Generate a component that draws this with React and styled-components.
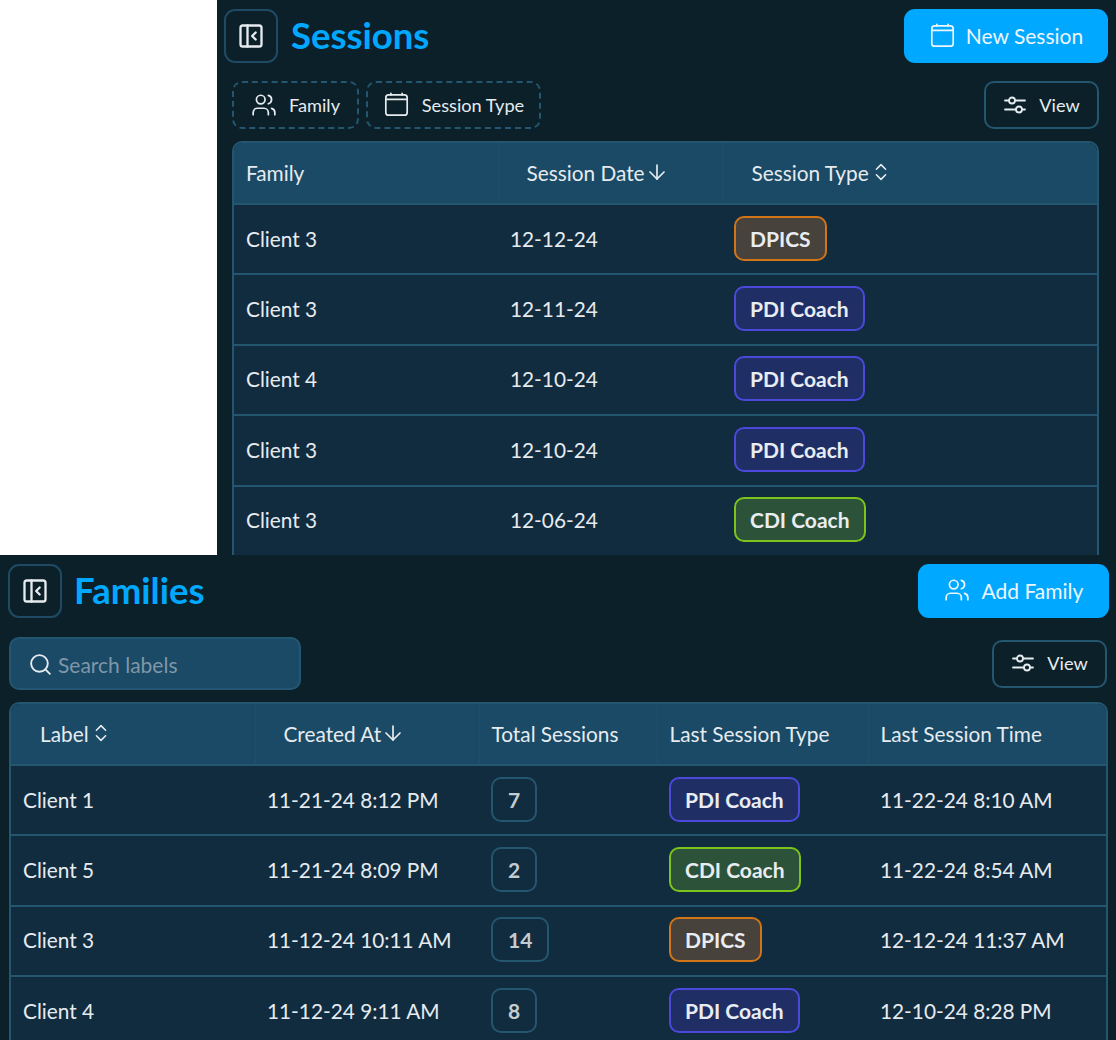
import React from 'react';
import styled, { createGlobalStyle } from 'styled-components';
import { PanelLeftClose, Users, Search, ArrowDown, ChevronsUpDown } from 'lucide-react';

const Global = createGlobalStyle`
  html, body { margin: 0; padding: 0; background: #0c2029; }
  body { font-family: Lato, "Noto Sans", sans-serif; color: #e6ebf0; }
  * { box-sizing: border-box; }
`;

const Top = styled.div`
  display: flex;
  height: 555px;
  overflow: hidden;
`;
const WhiteSide = styled.div`
  width: 217px;
  flex: none;
  background: #fff;
`;
const Panel = styled.section`
  flex: 1;
  min-width: 0;
  padding: ${p => p.$pad};
  background: #0c2029;
  overflow: hidden;
`;
const TitleRow = styled.div`
  display: flex;
  align-items: center;
  justify-content: space-between;
`;
const TitleLeft = styled.div`
  display: flex;
  align-items: center;
  gap: ${p => p.$gap}px;
`;
const Toggle = styled.button`
  width: 54px;
  height: 54px;
  display: flex;
  align-items: center;
  justify-content: center;
  background: transparent;
  border: 2px solid #1f4a63;
  border-radius: 11px;
  color: #e6ebf0;
  padding: 0;
`;
const Title = styled.h1`
  margin: 0;
  font-size: 36.5px;
  font-weight: 700;
  color: #00a8ff;
  line-height: 53px;
  padding-bottom: 1px;
`;
const Primary = styled.button`
  height: 54px;
  width: ${p => p.$w}px;
  display: flex;
  align-items: center;
  justify-content: center;
  gap: ${p => p.$gap}px;
  background: #00a8ff;
  border: none;
  border-radius: 11px;
  color: #eef6fb;
  font: 400 21px Lato, sans-serif;
  padding: 0 0 2px;
`;
const Toolbar = styled.div`
  display: flex;
  align-items: center;
  justify-content: space-between;
  margin: ${p => p.$margin};
`;
const Filters = styled.div`
  display: flex;
  gap: 7px;
`;
const Filter = styled.button`
  height: 48px;
  width: ${p => p.$w}px;
  display: flex;
  align-items: center;
  justify-content: center;
  gap: 12px;
  background: transparent;
  border: 2px dashed #24566f;
  border-radius: 10px;
  color: #e6ebf0;
  font: 400 18.2px Lato, sans-serif;
  padding: 0 0 1px;
`;
const ViewBtn = styled.button`
  height: 48px;
  width: 115px;
  display: flex;
  align-items: center;
  justify-content: center;
  gap: 12px;
  background: transparent;
  border: 2px solid #24566f;
  border-radius: 10px;
  color: #e6ebf0;
  font: 400 18.2px Lato, sans-serif;
  padding: 0 0 1px;
`;
const SearchBox = styled.div`
  width: 292px;
  height: 53px;
  display: flex;
  align-items: center;
  gap: 5px;
  padding: 1px 0 0 17px;
  background: #1a4a66;
  border: 2px solid #235672;
  border-radius: 10px;
  color: #e6ebf0;
  font-size: 21px;
  span { color: #7f97a8; }
`;
const TableWrap = styled.div`
  border: 2px solid #24566f;
  border-bottom: none;
  border-radius: 10px 10px 0 0;
  overflow: hidden;
  margin: ${p => p.$margin || 0};
`;
const Table = styled.table`
  width: 100%;
  border-collapse: collapse;
  table-layout: fixed;
  font-size: 20.8px;
`;
const Head = styled.th`
  height: 61px;
  padding: 0 12px 2px ${p => p.$pl || 12}px;
  background: #1a4a66;
  font-weight: 400;
  text-align: left;
  color: #e6ebf0;
  border-left: ${p => (p.$first ? 'none' : '1px solid #1f5068')};
  border-bottom: 2px solid #24566f;
  white-space: nowrap;
`;
const HeadInner = styled.span`
  display: inline-flex;
  align-items: center;
`;
const SortBoth = styled(ChevronsUpDown)`
  margin-left: 1px;
`;
const Row = styled.tr`
  height: 70.4px;
  background: #122c3f;
  border-bottom: 2px solid #24566f;
`;
const Cell = styled.td`
  padding: 0 12px 2px;
  white-space: nowrap;
  color: #e6ebf0;
`;
const BADGE = {
  DPICS: ['#47423b', '#d17517'],
  'PDI Coach': ['#1f2f66', '#4c48dc'],
  'CDI Coach': ['#2c5339', '#7cc41c'],
};
const Badge = styled.span`
  display: inline-flex;
  align-items: center;
  height: 45px;
  padding: 0 14px;
  border: 2px solid ${p => BADGE[p.$type][1]};
  border-radius: 10px;
  background: ${p => BADGE[p.$type][0]};
  font-size: 21px;
  font-weight: 700;
  color: #e9edf1;
  vertical-align: middle;
`;
const Count = styled.span`
  display: inline-flex;
  align-items: center;
  justify-content: center;
  height: 45px;
  min-width: 46px;
  padding: 0 15px;
  border: 2px solid #24566f;
  border-radius: 10px;
  font-size: 21px;
  font-weight: 700;
  color: #c3ccd3;
  vertical-align: middle;
`;

const CalendarIcon = () => (
  <svg width="27" height="27" viewBox="0 0 24 24" fill="none" stroke="currentColor" strokeWidth="1.5" strokeLinecap="round">
    <rect x="2.5" y="3.5" width="19" height="18" rx="2.5" />
    <path d="M2.5 7.5h19M7 2v1.5M17 2v1.5" />
  </svg>
);
const SlidersIcon = () => (
  <svg width="24" height="24" viewBox="0 0 24 24" fill="none" stroke="currentColor" strokeWidth="1.8" strokeLinecap="round">
    <path d="M2 7.5h4M12 7.5h10M2 16.5h11M19 16.5h3" />
    <circle cx="9" cy="7.5" r="3" />
    <circle cx="16" cy="16.5" r="3" />
  </svg>
);
const Collapse = () => (
  <Toggle>
    <PanelLeftClose size={28} strokeWidth={2} />
  </Toggle>
);

const sessions = [
  ['Client 3', '12-12-24', 'DPICS'],
  ['Client 3', '12-11-24', 'PDI Coach'],
  ['Client 4', '12-10-24', 'PDI Coach'],
  ['Client 3', '12-10-24', 'PDI Coach'],
  ['Client 3', '12-06-24', 'CDI Coach'],
];
const families = [
  ['Client 1', '11-21-24 8:12 PM', '7', 'PDI Coach', '11-22-24 8:10 AM'],
  ['Client 5', '11-21-24 8:09 PM', '2', 'CDI Coach', '11-22-24 8:54 AM'],
  ['Client 3', '11-12-24 10:11 AM', '14', 'DPICS', '12-12-24 11:37 AM'],
  ['Client 4', '11-12-24 9:11 AM', '8', 'PDI Coach', '12-10-24 8:28 PM'],
];

export default function App() {
  return (
    <>
      <Global />
      <Top>
        <WhiteSide />
        <Panel $pad="9px 8px 0 7px">
          <TitleRow>
            <TitleLeft $gap={13}>
              <Collapse />
              <Title>Sessions</Title>
            </TitleLeft>
            <Primary $w={204} $gap={10}><CalendarIcon />New Session</Primary>
          </TitleRow>
          <Toolbar $margin="18px 9px 12px 8px">
            <Filters>
              <Filter $w={127}><Users size={26} strokeWidth={1.6} />Family</Filter>
              <Filter $w={175}><CalendarIcon />Session Type</Filter>
            </Filters>
            <ViewBtn><SlidersIcon />View</ViewBtn>
          </Toolbar>
          <TableWrap $margin="0 9px 0 8px">
            <Table>
              <colgroup>
                <col style={{ width: 264 }} />
                <col style={{ width: 224 }} />
                <col />
              </colgroup>
              <thead>
                <tr>
                  <Head $first>Family</Head>
                  <Head $pl={28}><HeadInner>Session Date <ArrowDown size={24} strokeWidth={1.7} /></HeadInner></Head>
                  <Head $pl={29}><HeadInner>Session Type <SortBoth size={22} strokeWidth={1.7} /></HeadInner></Head>
                </tr>
              </thead>
              <tbody>
                {sessions.map((s, i) => (
                  <Row key={i}>
                    <Cell>{s[0]}</Cell>
                    <Cell>{s[1]}</Cell>
                    <Cell><Badge $type={s[2]}>{s[2]}</Badge></Cell>
                  </Row>
                ))}
              </tbody>
            </Table>
          </TableWrap>
        </Panel>
      </Top>
      <Panel $pad="9px 7px 0 8px">
        <TitleRow>
          <TitleLeft $gap={12}>
            <Collapse />
            <Title>Families</Title>
          </TitleLeft>
          <Primary $w={191} $gap={12}><Users size={26} strokeWidth={1.6} />Add Family</Primary>
        </TitleRow>
        <Toolbar $margin="19px 2px 12px 1px">
          <SearchBox><Search size={25} strokeWidth={1.8} /><span>Search labels</span></SearchBox>
          <ViewBtn><SlidersIcon />View</ViewBtn>
        </Toolbar>
        <TableWrap $margin="0 1px 0 1px">
          <Table>
            <colgroup>
              <col style={{ width: 244 }} />
              <col style={{ width: 224 }} />
              <col style={{ width: 178 }} />
              <col style={{ width: 211 }} />
              <col />
            </colgroup>
            <thead>
              <tr>
                <Head $first $pl={29}><HeadInner>Label <SortBoth size={22} strokeWidth={1.7} /></HeadInner></Head>
                <Head $pl={28}><HeadInner>Created At <ArrowDown size={24} strokeWidth={1.7} /></HeadInner></Head>
                <Head>Total Sessions</Head>
                <Head>Last Session Type</Head>
                <Head>Last Session Time</Head>
              </tr>
            </thead>
            <tbody>
              {families.map((f, i) => (
                <Row key={i}>
                  <Cell>{f[0]}</Cell>
                  <Cell>{f[1]}</Cell>
                  <Cell><Count>{f[2]}</Count></Cell>
                  <Cell><Badge $type={f[3]}>{f[3]}</Badge></Cell>
                  <Cell>{f[4]}</Cell>
                </Row>
              ))}
            </tbody>
          </Table>
        </TableWrap>
      </Panel>
    </>
  );
}
